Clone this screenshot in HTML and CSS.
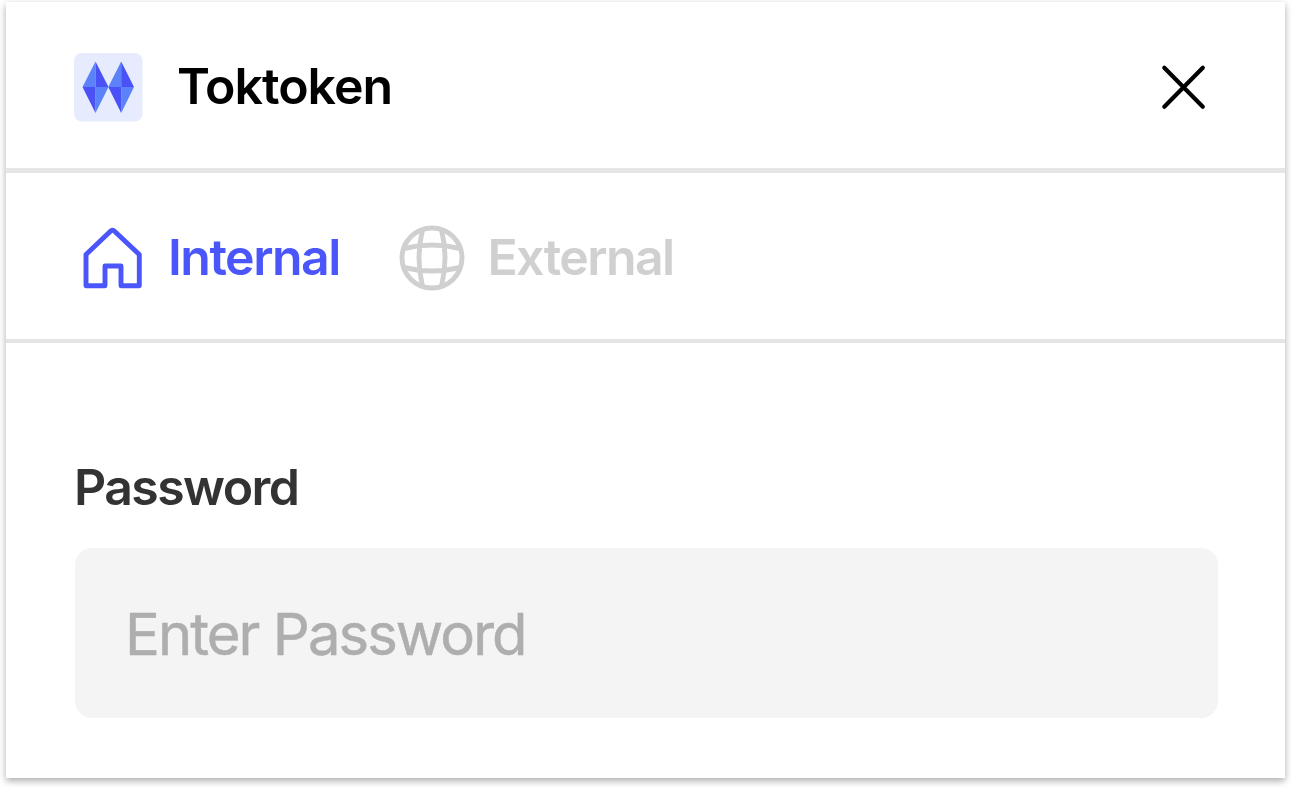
FILE: index.html
```
<!DOCTYPE html>
<html lang="en">
<head>
<meta charset="utf-8">
<title>Toktoken</title>
<link rel="stylesheet" href="styles.css">
</head>
<body>
<main class="card">
  <header class="header">
    <svg class="logo" viewBox="0 0 69 69" aria-hidden="true">
      <rect width="68.500" height="68.500" rx="8" fill="#e6ecfe"/>
      <path fill="#5b82f9" d="M21.500 8.500v25.500H8.500ZM21.500 34H34.500L21.500 60ZM47.200 8.500v25.500H34.300ZM47.200 34H60L47.200 60Z"/>
      <path fill="#4a52f6" d="M21.500 8.500L34.500 34H21.500ZM8.500 34H21.500V60ZM47.200 8.500L60 34H47.200ZM34.300 34H47.200V60Z"/>
    </svg>
    <h1 class="title">Toktoken</h1>
    <button class="close" aria-label="Close">
      <svg viewBox="0 0 48 48"><path d="M4.300 4.800L42.800 43.800M42.800 4.800L4.300 43.800" fill="none" stroke="#000" stroke-width="4.200" stroke-linecap="round"/></svg>
    </button>
  </header>
  <nav class="tabs">
    <a class="tab tab-active">
      <svg class="tab-icon" viewBox="0 0 66 66"><path d="M6 29.500L31 5.800Q32.500 4.600 34 5.800L59.300 29.500V60.700H41V41H25V60.700H6Z" fill="none" stroke="currentColor" stroke-width="4.900" stroke-linejoin="round"/></svg>
      <span class="internal">Internal</span>
    </a>
    <a class="tab">
      <svg class="tab-icon" viewBox="0 0 66 66"><g fill="none" stroke="currentColor" stroke-width="4.900"><circle cx="33" cy="33" r="30"/><path d="M5 23.500Q33 16.500 61 23.500M5 42.500Q33 49.500 61 42.500M23.500 5Q16.500 33 23.500 61M42.500 5Q49.500 33 42.500 61"/></g></svg>
      <span class="external">External</span>
    </a>
  </nav>
  <form class="form">
    <label class="label" for="password">Password</label>
    <input class="field" id="password" type="password" placeholder="Enter Password">
  </form>
</main>
</body>
</html>
```
FILE: styles.css
```
* { box-sizing: border-box; }
body {
  margin: 0;
  height: 788px;
  padding: 2px 7px 10px 6px;
  overflow: hidden;
  background: #fff;
  font-family: Inter, "Liberation Sans", sans-serif;
}
.card {
  height: 776px;
  background: #fff;
  box-shadow: 0 3px 7px rgba(0, 0, 0, 0.33);
}
.header {
  display: flex;
  align-items: center;
  height: 171px;
  padding: 0 77px 0 68px;
  border-bottom: 5px solid #e6e6e6;
}
.logo { width: 69px; height: 69px; margin-top: 4px; }
.title {
  margin: 2px 0 0 34px;
  font-size: 50px;
  line-height: 60px;
  font-weight: 600;
  letter-spacing: -1px;
  color: #000;
}
.close {
  width: 48px;
  height: 48px;
  margin: 4px 0 0 auto;
  padding: 0;
  border: 0;
  background: none;
}
.close svg { display: block; width: 48px; height: 48px; }
.tabs {
  display: flex;
  align-items: center;
  gap: 59.5px;
  height: 170px;
  padding: 4px 0 0 74px;
  border-bottom: 4px solid #e4e4e4;
}
.tab {
  display: flex;
  align-items: center;
  gap: 22px;
  font-size: 50px;
  line-height: 60px;
  font-weight: 600;
  color: #d0d0d0;
}
.tab-active { color: #4b56fa; }
.tab-icon { width: 66px; height: 66px; }
.internal { margin-top: -2px; letter-spacing: -1.5px; }
.external { margin-top: -2px; letter-spacing: -1.6px; }
.form { padding: 114px 67px 0 69px; }
.label {
  display: block;
  height: 60px;
  margin: 0 0 31px -1px;
  font-size: 50px;
  line-height: 60px;
  font-weight: 600;
  letter-spacing: -1.6px;
  color: #333;
}
.field {
  display: block;
  width: 100%;
  height: 170px;
  padding: 2px 50px 0;
  border: 0;
  border-radius: 17px;
  background: #f4f4f4;
  font-family: inherit;
  font-size: 58px;
  letter-spacing: -1.95px;
}
.field::placeholder { color: #aeaeae; opacity: 1; -webkit-text-stroke: 0.5px #aeaeae; }
```
